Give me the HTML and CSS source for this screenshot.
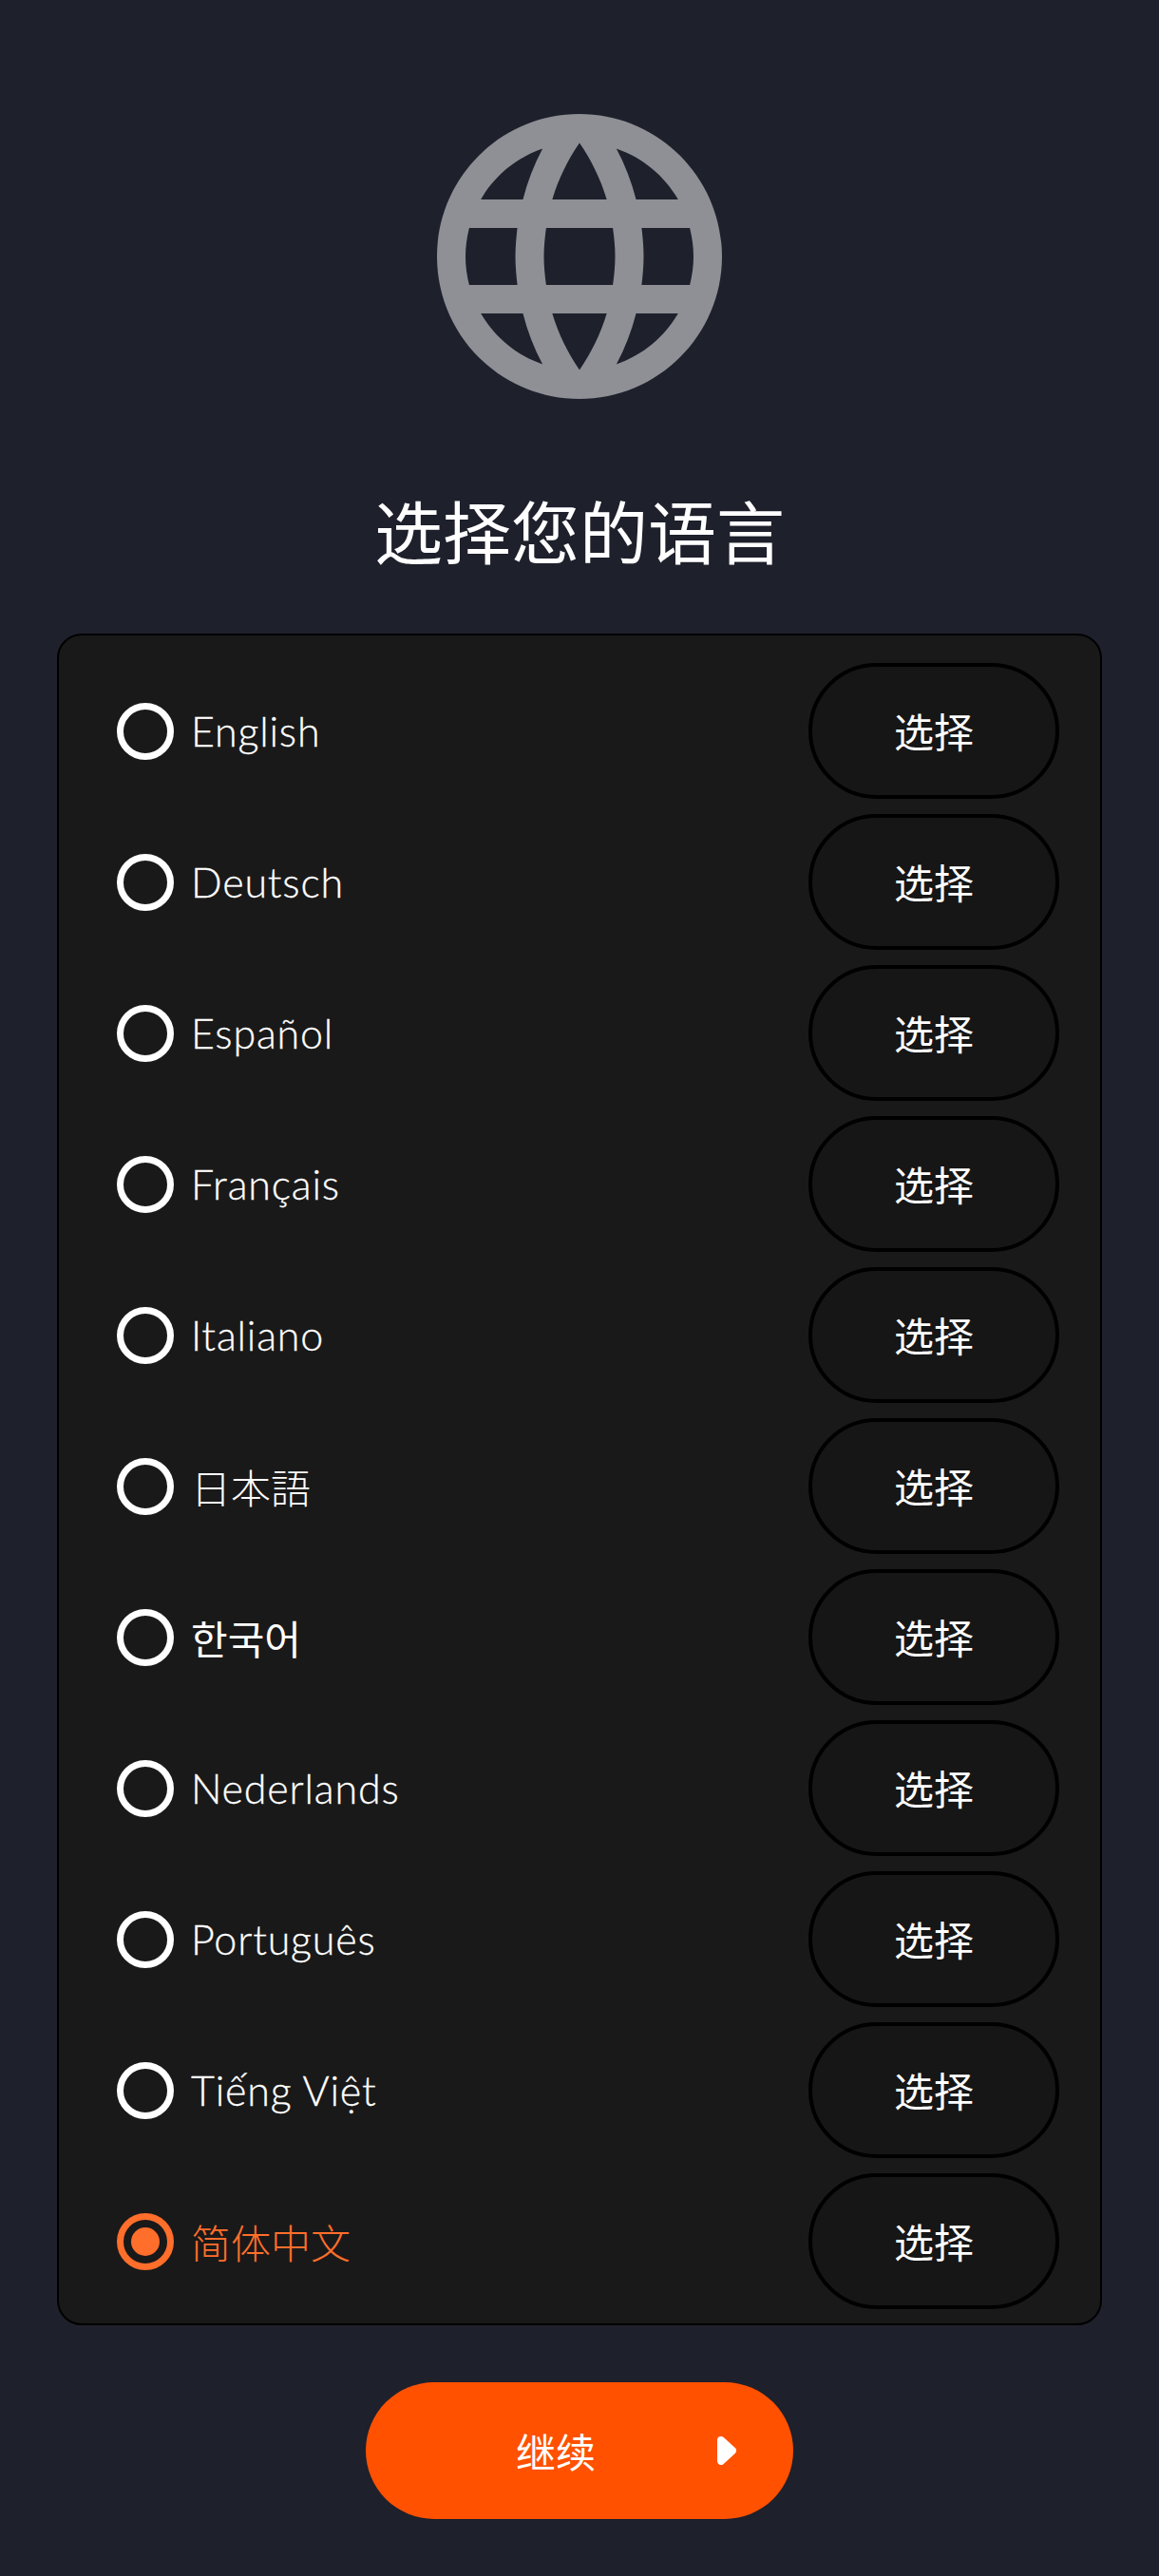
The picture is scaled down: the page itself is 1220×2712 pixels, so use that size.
FILE: index.html
```html
<!DOCTYPE html>
<html lang="zh-CN">
	<head>
		<meta name="viewport" content="width=device-width, initial-scale=1.0">
		<meta charset="utf-8">
		<title>选择您的语言</title>
		<link rel="stylesheet" href="styles.css">
	</head>
	<body>
		<main class="page">
			<svg class="globe" viewBox="2 2 20 20" aria-hidden="true">
				<path d="M11.99 2C6.47 2 2 6.48 2 12s4.47 10 9.99 10C17.52 22 22 17.52 22 12S17.52 2 11.99 2zm6.93 6h-2.95c-.32-1.25-.78-2.45-1.38-3.56 1.84.63 3.37 1.91 4.33 3.56zM12 4.04c.83 1.2 1.48 2.53 1.91 3.96h-3.82c.43-1.43 1.08-2.76 1.91-3.96zM4.26 14C4.1 13.36 4 12.69 4 12s.1-1.36.26-2h3.38c-.08.66-.14 1.32-.14 2 0 .68.06 1.34.14 2H4.26zm.82 2h2.95c.32 1.25.78 2.45 1.38 3.56-1.84-.63-3.37-1.9-4.33-3.56zm2.95-8H5.08c.96-1.66 2.49-2.93 4.33-3.56C8.81 5.55 8.35 6.75 8.03 8zM12 19.96c-.83-1.2-1.48-2.53-1.91-3.96h3.82c-.43 1.43-1.08 2.76-1.91 3.96zM14.34 14H9.66c-.09-.66-.16-1.32-.16-2 0-.68.07-1.35.16-2h4.68c.09.65.16 1.32.16 2 0 .68-.07 1.34-.16 2zm.25 5.56c.6-1.11 1.06-2.31 1.38-3.56h2.95c-.96 1.65-2.49 2.93-4.33 3.56zM16.36 14c.08-.66.14-1.32.14-2 0-.68-.06-1.34-.14-2h3.38c.16.64.26 1.31.26 2s-.1 1.36-.26 2h-3.38z"/>
			</svg>
			<h1 class="title">选择您的语言</h1>
			<ul class="langs">
				<li class="lang"><span class="radio"></span><span class="name" lang="en">English</span><button class="pick">选择</button></li>
				<li class="lang"><span class="radio"></span><span class="name" lang="de">Deutsch</span><button class="pick">选择</button></li>
				<li class="lang"><span class="radio"></span><span class="name" lang="es">Español</span><button class="pick">选择</button></li>
				<li class="lang"><span class="radio"></span><span class="name" lang="fr">Français</span><button class="pick">选择</button></li>
				<li class="lang"><span class="radio"></span><span class="name" lang="it">Italiano</span><button class="pick">选择</button></li>
				<li class="lang"><span class="radio"></span><span class="name ja" lang="ja">日本語</span><button class="pick">选择</button></li>
				<li class="lang"><span class="radio"></span><span class="name ko" lang="ko">한국어</span><button class="pick">选择</button></li>
				<li class="lang"><span class="radio"></span><span class="name" lang="nl">Nederlands</span><button class="pick">选择</button></li>
				<li class="lang"><span class="radio"></span><span class="name" lang="pt">Português</span><button class="pick">选择</button></li>
				<li class="lang"><span class="radio"></span><span class="name" lang="vi">Tiếng Việt</span><button class="pick">选择</button></li>
				<li class="lang active"><span class="radio"></span><span class="name zh" lang="zh-CN">简体中文</span><button class="pick">选择</button></li>
			</ul>
			<button class="next">
				<span class="next-label">继续</span>
				<svg class="next-icon" viewBox="0 0 20 30" aria-hidden="true">
					<path d="M4 4 L16 15 L4 26 Z"/>
				</svg>
			</button>
		</main>
	</body>
</html>
```

FILE: styles.css
```css
body { margin:0; background:#1e202c; color:#fff; font-family:"Noto Sans CJK SC","Noto Sans",sans-serif }
.page { display:flex; flex-direction:column; align-items:center; height:2712px; overflow:hidden; padding:120px 60px 0; box-sizing:border-box }
.page > * { flex:none }
.globe { display:block; width:300px; height:300px; fill:#8e9095 }
.title { margin:84px 0 0; font-size:72px; font-weight:400; line-height:106px; height:106px }
.langs { list-style:none; width:100%; box-sizing:border-box; margin:57px 0 0; padding:29px 43px 15px 61px; background:#191919; border:2px solid #000; border-radius:26px; display:flex; flex-direction:column; gap:16px }
.lang { display:flex; align-items:center; height:143px }
.radio { width:60px; height:60px; box-sizing:border-box; border:7px solid #fff; border-radius:50%; display:flex; align-items:center; justify-content:center; flex:none }
.name { margin-left:18px; padding-bottom:1px; flex:1; font-family:"Lato","Noto Sans",sans-serif; font-weight:300; font-size:43px; letter-spacing:0.8px; -webkit-text-stroke:0.3px }
.name.ja, .name.ko, .name.zh { font-size:42px; letter-spacing:0; -webkit-text-stroke:0; font-weight:300 }
.name.ja { font-family:"Noto Sans CJK JP",sans-serif }
.name.ko { font-family:"Noto Sans CJK KR",sans-serif; font-weight:400 }
.name.zh { font-family:"Noto Sans CJK SC",sans-serif }
.active .radio { border-color:#ff6e2b }
.active .radio::after { content:""; width:30px; height:30px; border-radius:50%; background:#ff6e2b }
.active .name { color:#ff6e2b }
.pick { width:264px; height:143px; box-sizing:border-box; background:#161616; border:4px solid #000; border-radius:72px; color:#fff; font:400 42px "Noto Sans CJK SC",sans-serif; padding:0 0 2px }
.next { position:relative; margin-top:60px; width:450px; height:144px; border:0; border-radius:72px; background:#ff5100; color:#fff; font:400 42px "Noto Sans CJK SC",sans-serif; display:flex; align-items:center; padding:0 0 2px 158px; box-sizing:border-box }
.next-icon { position:absolute; left:370px; top:57px; width:20px; height:30px; fill:#fff; stroke:#fff; stroke-width:8; stroke-linejoin:round }
```
